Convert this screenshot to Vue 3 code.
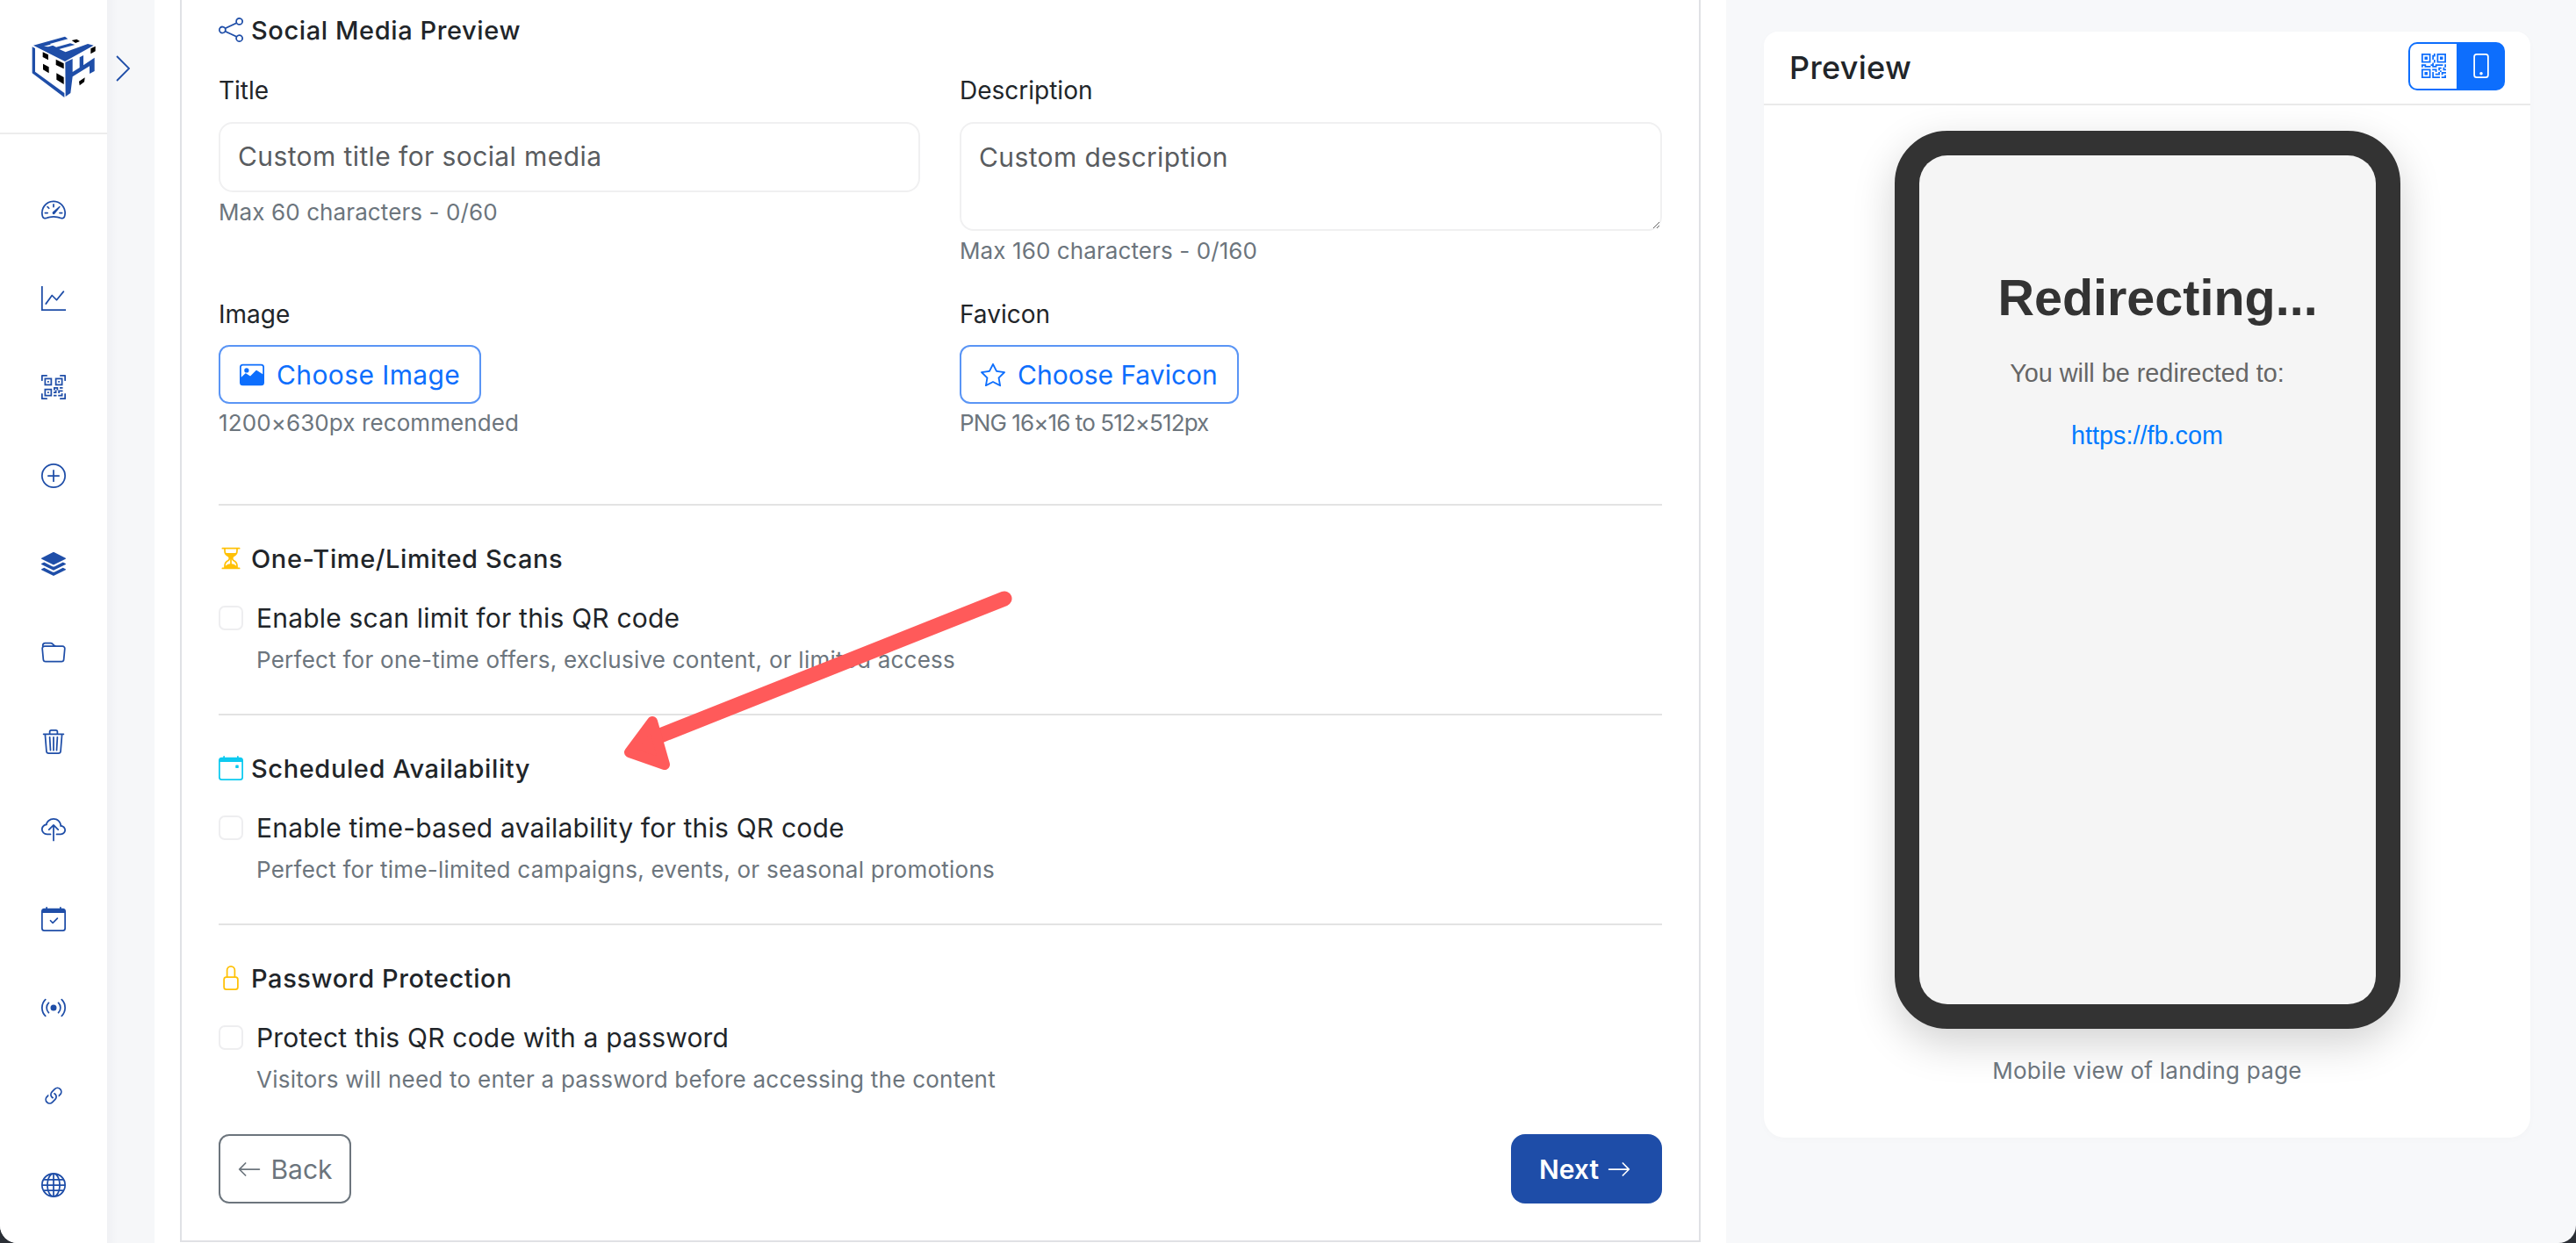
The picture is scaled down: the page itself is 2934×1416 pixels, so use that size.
<template>
  <div class="shell">
    <div class="app">
      <aside class="sidebar">
        <div class="logo-wrap">
          <svg class="logo" viewBox="105 120 225 216">
            <polygon fill="#1f4ea8" points="110,160 120,165 120,245 220,318 220,333 110,250" />
            <polygon fill="#1f4ea8" points="223,213 248,201 248,246 272,231 272,196 285,189 285,223 323,197 323,243 306,252 306,226 248,262 241,318 224,330" />
            <polygon fill="#1f4ea8" points="114,155 222,125 232,133 170,150 192,161 240,148 256,153 202,168 224,178 300,150 320,155 222,210" />
            <polygon fill="#fff" points="150,158 205,143 212,146 165,160" />
            <polygon fill="#000" points="146,178 165,187 165,205 146,195" />
            <polygon fill="#000" points="147,218 167,229 167,250 147,238" />
            <polygon fill="#000" points="191,203 218,217 218,235 191,222" />
            <polygon fill="#000" points="193,250 218,264 218,288 193,272" />
            <polygon fill="#000" points="270,278 290,265 288,280 272,292" />
            <polygon fill="#000" points="310,166 326,158 326,175 310,184" />
            <polygon fill="#000" points="245,138 262,134 273,141 258,147" />
          </svg>
        </div>
        <nav class="nav">
          <svg v-for="(icon, i) in navIcons" :key="i" class="nav-icon" viewBox="0 0 16 16" fill="currentColor">
            <path v-for="d in icon" :key="d" :d="d" />
          </svg>
        </nav>
      </aside>

      <div class="gutter">
        <svg class="toggle" viewBox="0 0 16 30" fill="none" stroke="#1f4ea8" stroke-width="1.8">
          <path d="M1 1l14 14L1 29" />
        </svg>
      </div>

      <main class="form-col">
        <div class="card">
          <h3 class="section-title">
            <svg class="title-icon share" viewBox="0 0 16 16" fill="currentColor"><path :d="shareIcon" /></svg>
            Social Media Preview
          </h3>

          <div class="grid">
            <div class="field">
              <label class="label">Title</label>
              <input class="input" placeholder="Custom title for social media" />
              <div class="hint">Max 60 characters - 0/60</div>
            </div>
            <div class="field">
              <label class="label">Description</label>
              <textarea class="input textarea" placeholder="Custom description"></textarea>
              <div class="hint">Max 160 characters - 0/160</div>
            </div>
            <div class="field">
              <label class="label">Image</label>
              <button class="choose-btn">
                <svg viewBox="0 0 16 16" fill="currentColor">
                  <path d="M2 1h12a2 2 0 0 1 2 2v10a2 2 0 0 1-2 2H2a2 2 0 0 1-2-2V3a2 2 0 0 1 2-2m0 1a1 1 0 0 0-1 1v6.5l2.6-2.3a.5.5 0 0 1 .63-.06l2.66 1.77 3.71-3.71a.5.5 0 0 1 .58-.09L15 7.5V3a1 1 0 0 0-1-1z" />
                  <path d="M4.5 3.6a1.5 1.5 0 1 1 0 3 1.5 1.5 0 0 1 0-3" />
                </svg>
                Choose Image
              </button>
              <div class="hint hint-tight">1200×630px recommended</div>
            </div>
            <div class="field">
              <label class="label">Favicon</label>
              <button class="choose-btn choose-btn--fav">
                <svg viewBox="0 0 16 16" fill="currentColor"><path :d="starIcon" /></svg>
                Choose Favicon
              </button>
              <div class="hint hint-tight hint-narrow">PNG 16×16 to 512×512px</div>
            </div>
          </div>

          <section v-for="s in sections" :key="s.title" class="option">
            <h3 class="section-title">
              <svg class="title-icon" :class="s.tone" viewBox="0 0 16 16" fill="currentColor">
                <path v-for="d in s.icon" :key="d" :d="d" />
              </svg>
              {{ s.title }}
            </h3>
            <label class="check-row">
              <input type="checkbox" class="check" />
              <span>{{ s.label }}</span>
            </label>
            <div class="check-desc">{{ s.desc }}</div>
          </section>

          <div class="actions">
            <button class="btn-back">
              <svg viewBox="0 0 16 16" fill="currentColor"><path :d="arrowLeft" /></svg>
              Back
            </button>
            <button class="btn-next">
              Next
              <svg viewBox="0 0 16 16" fill="currentColor"><path :d="arrowRight" /></svg>
            </button>
          </div>
        </div>
      </main>

      <aside class="preview-col">
        <div class="preview-card">
          <header class="preview-head">
            <h2>Preview</h2>
            <div class="switch">
              <button class="switch-btn">
                <svg viewBox="0 0 16 16" fill="currentColor">
                  <path v-for="d in qrIcon" :key="d" :d="d" />
                </svg>
              </button>
              <button class="switch-btn switch-btn--active">
                <svg viewBox="0 0 16 16" fill="currentColor">
                  <path d="M11 1a1 1 0 0 1 1 1v12a1 1 0 0 1-1 1H5a1 1 0 0 1-1-1V2a1 1 0 0 1 1-1zM5 0a2 2 0 0 0-2 2v12a2 2 0 0 0 2 2h6a2 2 0 0 0 2-2V2a2 2 0 0 0-2-2z" />
                  <path d="M8 14a1 1 0 1 0 0-2 1 1 0 0 0 0 2" />
                </svg>
              </button>
            </div>
          </header>
          <div class="preview-body">
            <div class="phone">
              <div class="screen">
                <h1>Redirecting...</h1>
                <p>You will be redirected to:</p>
                <a>https://fb.com</a>
              </div>
            </div>
            <div class="caption">Mobile view of landing page</div>
          </div>
        </div>
      </aside>

      <svg class="annotation" viewBox="0 0 2934 1416">
        <line x1="1144" y1="682" x2="752" y2="838" stroke="#ff5a5a" stroke-width="17" stroke-linecap="round" />
        <polygon points="743,822 717,857 757,871" fill="#ff5a5a" stroke="#ff5a5a" stroke-width="12" stroke-linejoin="round" />
      </svg>
    </div>
  </div>
</template>

<script setup>
const navIcons = [
  ['M8 4a.5.5 0 0 1 .5.5V6a.5.5 0 0 1-1 0V4.5A.5.5 0 0 1 8 4M3.732 5.732a.5.5 0 0 1 .707 0l.915.914a.5.5 0 1 1-.708.708l-.914-.915a.5.5 0 0 1 0-.707M2 10a.5.5 0 0 1 .5-.5h1.586a.5.5 0 0 1 0 1H2.5A.5.5 0 0 1 2 10m9.5 0a.5.5 0 0 1 .5-.5h1.5a.5.5 0 0 1 0 1H12a.5.5 0 0 1-.5-.5m.754-4.246a.39.39 0 0 0-.527-.02L7.547 9.31a.91.91 0 1 0 1.302 1.258l3.434-4.297a.39.39 0 0 0-.029-.518z', 'M0 10a8 8 0 1 1 15.547 2.661c-.442 1.253-1.845 1.602-2.932 1.25C11.309 13.488 9.475 13 8 13c-1.474 0-3.31.488-4.615.911-1.087.352-2.49.003-2.932-1.25A8 8 0 0 1 0 10m8-7a7 7 0 0 0-6.603 9.329c.203.575.923.876 1.68.63C4.397 12.533 6.358 12 8 12s3.604.532 4.923.96c.757.245 1.477-.056 1.68-.631A7 7 0 0 0 8 3'],
  ['M0 0h1v15h15v1H0zm14.817 3.113a.5.5 0 0 1 .07.704l-4.5 5.5a.5.5 0 0 1-.74.037L7.06 6.767l-3.656 5.027a.5.5 0 0 1-.808-.588l4-5.5a.5.5 0 0 1 .758-.06l2.609 2.61 4.15-5.073a.5.5 0 0 1 .704-.07'],
  ['M0 .5A.5.5 0 0 1 .5 0h3a.5.5 0 0 1 0 1H1v2.5a.5.5 0 0 1-1 0zm12 0a.5.5 0 0 1 .5-.5h3a.5.5 0 0 1 .5.5v3a.5.5 0 0 1-1 0V1h-2.5a.5.5 0 0 1-.5-.5M.5 12a.5.5 0 0 1 .5.5V15h2.5a.5.5 0 0 1 0 1h-3a.5.5 0 0 1-.5-.5v-3a.5.5 0 0 1 .5-.5m15 0a.5.5 0 0 1 .5.5v3a.5.5 0 0 1-.5.5h-3a.5.5 0 0 1 0-1H15v-2.5a.5.5 0 0 1 .5-.5M4 4h1v1H4z', 'M7 2H2v5h5zM3 3h3v3H3zm2 8H4v1h1z', 'M7 9H2v5h5zm-4 1h3v3H3zm8-6h1v1h-1z', 'M9 2h5v5H9zm1 1v3h3V3zM8 8v2h1v1H8v1h2v-2h1v2h1v-1h2v-1h-3V8zm2 2H9V9h1zm4 2h-1v1h-2v1h3zm-4 2v-1H8v1z', 'M12 9h2V8h-2z'],
  ['M8 15A7 7 0 1 1 8 1a7 7 0 0 1 0 14m0 1A8 8 0 1 0 8 0a8 8 0 0 0 0 16', 'M8 4a.5.5 0 0 1 .5.5v3h3a.5.5 0 0 1 0 1h-3v3a.5.5 0 0 1-1 0v-3h-3a.5.5 0 0 1 0-1h3v-3A.5.5 0 0 1 8 4'],
  ['m14.12 10.163 1.715.858c.22.11.22.424 0 .534L8.267 15.34a.6.6 0 0 1-.534 0L.165 11.555a.299.299 0 0 1 0-.534l1.716-.858 5.317 2.659c.505.252 1.1.252 1.604 0l5.317-2.66zM7.733.063a.6.6 0 0 1 .534 0l7.568 3.784a.3.3 0 0 1 0 .535L8.267 8.165a.6.6 0 0 1-.534 0L.165 4.382a.299.299 0 0 1 0-.535z', 'm14.12 6.576 1.715.858c.22.11.22.424 0 .534l-7.568 3.784a.6.6 0 0 1-.534 0L.165 7.968a.299.299 0 0 1 0-.534l1.716-.858 5.317 2.659c.505.252 1.1.252 1.604 0z'],
  ['M.54 3.87.5 3a2 2 0 0 1 2-2h3.672a2 2 0 0 1 1.414.586l.828.828A2 2 0 0 0 9.828 3h3.982a2 2 0 0 1 1.992 2.181l-.637 7A2 2 0 0 1 13.174 14H2.826a2 2 0 0 1-1.991-1.819l-.637-7a2 2 0 0 1 .342-1.31zM2.19 4a1 1 0 0 0-.996 1.09l.637 7a1 1 0 0 0 .995.91h10.348a1 1 0 0 0 .995-.91l.637-7A1 1 0 0 0 13.81 4zm4.69-1.707A1 1 0 0 0 6.172 2H2.5a1 1 0 0 0-1 .981l.006.139q.323-.119.684-.12h5.396z'],
  ['M6.5 1h3a.5.5 0 0 1 .5.5v1H6v-1a.5.5 0 0 1 .5-.5M11 2.5v-1A1.5 1.5 0 0 0 9.5 0h-3A1.5 1.5 0 0 0 5 1.5v1H1.5a.5.5 0 0 0 0 1h.538l.853 10.66A2 2 0 0 0 4.885 16h6.23a2 2 0 0 0 1.994-1.84l.853-10.66h.538a.5.5 0 0 0 0-1zm1.958 1-.846 10.58a1 1 0 0 1-.997.92h-6.23a1 1 0 0 1-.997-.92L3.042 3.5zm-7.487 1a.5.5 0 0 1 .528.47l.5 8.5a.5.5 0 0 1-.998.06L5 5.03a.5.5 0 0 1 .47-.53Zm5.058 0a.5.5 0 0 1 .47.53l-.5 8.5a.5.5 0 1 1-.998-.06l.5-8.5a.5.5 0 0 1 .528-.47M8 4.5a.5.5 0 0 1 .5.5v8.5a.5.5 0 0 1-1 0V5a.5.5 0 0 1 .5-.5'],
  ['M4.406 1.342A5.53 5.53 0 0 1 8 0c2.69 0 4.923 2 5.166 4.579C14.758 4.804 16 6.137 16 7.773 16 9.569 14.502 11 12.687 11H10a.5.5 0 0 1 0-1h2.688C13.979 10 15 8.988 15 7.773c0-1.216-1.02-2.228-2.313-2.228h-.5v-.5C12.188 2.825 10.328 1 8 1a4.53 4.53 0 0 0-2.941 1.1c-.757.652-1.153 1.438-1.153 2.055v.448l-.445.049C2.064 4.805 1 5.952 1 7.318 1 8.785 2.23 10 3.781 10H6a.5.5 0 0 1 0 1H3.781C1.708 11 0 9.366 0 7.318c0-1.763 1.266-3.223 2.942-3.593.143-.863.698-1.723 1.464-2.383', 'M7.646 4.146a.5.5 0 0 1 .708 0l3 3a.5.5 0 0 1-.708.708L8.5 5.707V14.5a.5.5 0 0 1-1 0V5.707L5.354 7.854a.5.5 0 1 1-.708-.708z'],
  ['M10.854 7.146a.5.5 0 0 1 0 .708l-3 3a.5.5 0 0 1-.708 0l-1.5-1.5a.5.5 0 1 1 .708-.708L7.5 9.793l2.646-2.647a.5.5 0 0 1 .708 0', 'M3.5 0a.5.5 0 0 1 .5.5V1h8V.5a.5.5 0 0 1 1 0V1h1a2 2 0 0 1 2 2v11a2 2 0 0 1-2 2H2a2 2 0 0 1-2-2V3a2 2 0 0 1 2-2h1V.5a.5.5 0 0 1 .5-.5M1 4v10a1 1 0 0 0 1 1h12a1 1 0 0 0 1-1V4z'],
  ['M3.05 3.05a7 7 0 0 0 0 9.9.5.5 0 0 1-.707.707 8 8 0 0 1 0-11.314.5.5 0 0 1 .707.707m2.122 2.122a4 4 0 0 0 0 5.656.5.5 0 1 1-.708.708 5 5 0 0 1 0-7.072.5.5 0 0 1 .708.708m5.656-.708a.5.5 0 0 1 .708 0 5 5 0 0 1 0 7.072.5.5 0 1 1-.708-.708 4 4 0 0 0 0-5.656.5.5 0 0 1 0-.708m2.122-2.12a.5.5 0 0 1 .707 0 8 8 0 0 1 0 11.313.5.5 0 0 1-.707-.707 7 7 0 0 0 0-9.9.5.5 0 0 1 0-.707zM10 8a2 2 0 1 1-4 0 2 2 0 0 1 4 0'],
  ['M4.715 6.542 3.343 7.914a3 3 0 1 0 4.243 4.243l1.828-1.829A3 3 0 0 0 8.586 5.5L8 6.086a1 1 0 0 0-.154.199 2 2 0 0 1 .861 3.337L6.88 11.45a2 2 0 1 1-2.83-2.83l.793-.792a4 4 0 0 1-.128-1.287z', 'M6.586 4.672A3 3 0 0 0 7.414 9.5l.775-.776a2 2 0 0 1-.896-3.346L9.12 3.55a2 2 0 1 1 2.83 2.83l-.793.792c.112.42.155.855.128 1.287l1.372-1.372a3 3 0 1 0-4.243-4.243z'],
  ['M0 8a8 8 0 1 1 16 0A8 8 0 0 1 0 8m7.5-6.923c-.67.204-1.335.82-1.887 1.855A8 8 0 0 0 5.145 4H7.5zM4.09 4a9.3 9.3 0 0 1 .64-1.539 7 7 0 0 1 .597-.933A7.03 7.03 0 0 0 2.255 4zm-.582 3.5c.03-.877.138-1.718.312-2.5H1.674a7 7 0 0 0-.656 2.5zM4.847 5a12.5 12.5 0 0 0-.338 2.5H7.5V5zM8.5 5v2.5h2.99a12.5 12.5 0 0 0-.337-2.5zM4.51 8.5a12.5 12.5 0 0 0 .337 2.5H7.5V8.5zm3.99 0V11h2.653c.187-.765.306-1.608.338-2.5zM5.145 12q.208.58.468 1.068c.552 1.035 1.218 1.65 1.887 1.855V12zm.182 2.472a7 7 0 0 1-.597-.933A9.3 9.3 0 0 1 4.09 12H2.255a7 7 0 0 0 3.072 2.472M3.82 11a13.7 13.7 0 0 1-.312-2.5h-2.49c.062.89.291 1.733.656 2.5zm6.853 3.472A7 7 0 0 0 13.745 12H11.91a9.3 9.3 0 0 1-.64 1.539 7 7 0 0 1-.597.933M8.5 12v2.923c.67-.204 1.335-.82 1.887-1.855q.26-.487.468-1.068zm3.68-1h2.146c.365-.767.594-1.61.656-2.5h-2.49a13.7 13.7 0 0 1-.312 2.5m2.802-3.5a7 7 0 0 0-.656-2.5H12.18c.174.782.282 1.623.312 2.5zM11.27 2.461c.247.464.462.98.64 1.539h1.835a7 7 0 0 0-3.072-2.472c.218.284.418.598.597.933M10.855 4a8 8 0 0 0-.468-1.068C9.835 1.897 9.17 1.282 8.5 1.077V4z'],
]

const shareIcon = 'M13.5 1a1.5 1.5 0 1 0 0 3 1.5 1.5 0 0 0 0-3M11 2.5a2.5 2.5 0 1 1 .603 1.628l-6.718 3.12a2.5 2.5 0 0 1 0 1.504l6.718 3.12a2.5 2.5 0 1 1-.488.876l-6.718-3.12a2.5 2.5 0 1 1 0-3.256l6.718-3.12A2.5 2.5 0 0 1 11 2.5m-8.5 4a1.5 1.5 0 1 0 0 3 1.5 1.5 0 0 0 0-3m11 5.5a1.5 1.5 0 1 0 0 3 1.5 1.5 0 0 0 0-3'
const starIcon = 'M2.866 14.85c-.078.444.36.791.746.593l4.39-2.256 4.389 2.256c.386.198.824-.149.746-.592l-.83-4.73 3.522-3.356c.33-.314.16-.888-.282-.95l-4.898-.696L8.465.792a.513.513 0 0 0-.927 0L5.354 5.12l-4.898.696c-.441.062-.612.636-.283.95l3.523 3.356-.83 4.73zm4.905-2.767-3.686 1.894.694-3.957a.56.56 0 0 0-.163-.505L1.71 6.745l4.052-.576a.53.53 0 0 0 .393-.288L8 2.223l1.847 3.658a.53.53 0 0 0 .393.288l4.052.575-2.906 2.77a.56.56 0 0 0-.163.506l.694 3.957-3.686-1.894a.5.5 0 0 0-.461 0z'
const arrowLeft = 'M15 8a.5.5 0 0 0-.5-.5H2.707l3.147-3.146a.5.5 0 1 0-.708-.708l-4 4a.5.5 0 0 0 0 .708l4 4a.5.5 0 0 0 .708-.708L2.707 8.5H14.5A.5.5 0 0 0 15 8'
const arrowRight = 'M1 8a.5.5 0 0 1 .5-.5h11.793l-3.147-3.146a.5.5 0 0 1 .708-.708l4 4a.5.5 0 0 1 0 .708l-4 4a.5.5 0 0 1-.708-.708L13.293 8.5H1.5A.5.5 0 0 1 1 8'
const qrIcon = [
  'M2 2h2v2H2z',
  'M6 0v6H0V0zM5 1H1v4h4zM4 12H2v2h2z',
  'M6 10v6H0v-6zm-5 1v4h4v-4zm11-9h2v2h-2z',
  'M10 0v6h6V0zm5 1v4h-4V1zM8 1V0h1v2H8v2H7V1zm0 5V4h1v2zM6 8V7h1V6h1v2h1V7h5v1h-4v1H7V8zm0 0v1H2V8H1v1H0V7h3v1zm10 1h-1V7h1zm-1 0h-1v2h2v-1h-1zm-4 0h2v1h-1v1h-1zm2 3v-1h-1v1h-1v1H9v1h3v-2zm0 0h3v1h-2v1h-1zm-4-1v1h1v-2H7v1z',
  'M7 12h1v3h4v1H7zm9 2v2h-3v-1h2v-1z',
]

const sections = [
  {
    title: 'One-Time/Limited Scans',
    label: 'Enable scan limit for this QR code',
    desc: 'Perfect for one-time offers, exclusive content, or limited access',
    tone: 'amber',
    icon: ['M2.5 15a.5.5 0 1 1 0-1h1v-1a4.5 4.5 0 0 1 2.557-4.06c.29-.139.443-.377.443-.59v-.7c0-.213-.154-.451-.443-.59A4.5 4.5 0 0 1 3.5 3V2h-1a.5.5 0 0 1 0-1h11a.5.5 0 0 1 0 1h-1v1a4.5 4.5 0 0 1-2.557 4.06c-.29.139-.443.377-.443.59v.7c0 .213.154.451.443.59A4.5 4.5 0 0 1 12.5 13v1h1a.5.5 0 0 1 0 1zm2-13v1c0 .537.12 1.045.337 1.5h6.326c.216-.455.337-.963.337-1.5V2zm3 6.35c0 .701-.478 1.236-1.011 1.492A3.5 3.5 0 0 0 4.5 13s.866-1.299 3-1.48zm1 0v3.17c2.134.181 3 1.48 3 1.48a3.5 3.5 0 0 0-1.989-3.158C8.978 9.586 8.5 9.052 8.5 8.351z'],
  },
  {
    title: 'Scheduled Availability',
    label: 'Enable time-based availability for this QR code',
    desc: 'Perfect for time-limited campaigns, events, or seasonal promotions',
    tone: 'cyan',
    icon: ['M11 6.5a.5.5 0 0 1 .5-.5h1a.5.5 0 0 1 .5.5v1a.5.5 0 0 1-.5.5h-1a.5.5 0 0 1-.5-.5z', 'M3.5 0a.5.5 0 0 1 .5.5V1h8V.5a.5.5 0 0 1 1 0V1h1a2 2 0 0 1 2 2v11a2 2 0 0 1-2 2H2a2 2 0 0 1-2-2V3a2 2 0 0 1 2-2h1V.5a.5.5 0 0 1 .5-.5M1 4v10a1 1 0 0 0 1 1h12a1 1 0 0 0 1-1V4z'],
  },
  {
    title: 'Password Protection',
    label: 'Protect this QR code with a password',
    desc: 'Visitors will need to enter a password before accessing the content',
    tone: 'amber',
    icon: ['M8 1a2 2 0 0 1 2 2v4H6V3a2 2 0 0 1 2-2m3 6V3a3 3 0 0 0-6 0v4a2 2 0 0 0-2 2v5a2 2 0 0 0 2 2h6a2 2 0 0 0 2-2V9a2 2 0 0 0-2-2M5 8h6a1 1 0 0 1 1 1v5a1 1 0 0 1-1 1H5a1 1 0 0 1-1-1V9a1 1 0 0 1 1-1'],
  },
]
</script>

<style>
html, body { margin: 0; background: #2b2f36; }
</style>

<style scoped>
.shell {
  width: 2934px;
  height: 1416px;
  background: #2b2f36;
  overflow: hidden;
  font-family: Inter, "Noto Sans", sans-serif;
}

.app {
  position: relative;
  display: flex;
  height: 100%;
  background: #f7f8fa;
  border-radius: 0 0 20px 20px;
  overflow: hidden;
}

/* sidebar */
.sidebar {
  width: 122px;
  flex: none;
  background: #fff;
}
.logo-wrap {
  height: 153px;
  box-sizing: border-box;
  border-bottom: 2px solid #ececec;
  padding: 40px 0 0 35px;
}
.logo {
  display: block;
  width: 75px;
  height: 72px;
}
.nav {
  display: flex;
  flex-direction: column;
  align-items: center;
  gap: 73px;
  padding-top: 72px;
  color: #1f4ea8;
}
.nav-icon {
  width: 28px;
  height: 28px;
  flex: none;
}

.gutter {
  position: relative;
  width: 54px;
  flex: none;
  background: linear-gradient(90deg, #f0f1f4, #f6f7f9 12px);
}
.toggle {
  position: absolute;
  left: 10px;
  top: 63px;
  width: 16px;
  height: 30px;
}

/* form */
.form-col {
  width: 1790px;
  flex: none;
  box-sizing: border-box;
  padding: 0 29px;
  background: #fff;
}
.card {
  box-sizing: border-box;
  width: 1732px;
  padding: 14px 42px 42px 42px;
  background: #fff;
  border: 2px solid #e0e1e5;
  border-top: 0;
}
.section-title {
  display: flex;
  align-items: center;
  gap: 9px;
  box-sizing: border-box;
  margin: 0;
  height: 42px;
  padding-bottom: 2px;
  font-size: 29px;
  font-weight: 500;
  letter-spacing: 0.6px;
  color: #212529;
}
.title-icon {
  width: 28px;
  height: 28px;
  flex: none;
}
.share { color: #1f4ea8; }
.amber { color: #ffc107; }
.cyan { color: #0dcaf0; }

.grid {
  display: grid;
  grid-template-columns: 799px 800px;
  column-gap: 45px;
  row-gap: 36px;
  margin-top: 29px;
}
.label {
  display: block;
  height: 36px;
  line-height: 36px;
  margin-bottom: 18px;
  font-size: 28px;
  color: #212529;
}
.input {
  display: block;
  box-sizing: border-box;
  width: 100%;
  height: 80px;
  padding: 0 20px 2px;
  border: 2px solid #f0f0f1;
  border-radius: 16px;
  background: #fff;
  font: 400 30px Inter, sans-serif;
  letter-spacing: 0.4px;
  color: #595c5f;
  outline: none;
}
.input::placeholder {
  color: #595c5f;
  opacity: 1;
}
.textarea {
  height: 124px;
  padding: 16px 20px;
  line-height: 44px;
}
.hint {
  height: 36px;
  line-height: 36px;
  margin-top: 5px;
  font-size: 26px;
  letter-spacing: 0.1px;
  color: #6c757d;
}
.hint-tight { margin-top: 4px; }
.hint-narrow { letter-spacing: -0.9px; }

.choose-btn {
  display: inline-flex;
  align-items: center;
  gap: 14px;
  height: 67px;
  margin-top: -1px;
  padding: 0 22px;
  border: 2px solid #5a95f5;
  border-radius: 12px;
  background: #fff;
  font: 400 30px Inter, sans-serif;
  letter-spacing: 0.4px;
  color: #0d6efd;
}
.choose-btn--fav { letter-spacing: 0; }
.choose-btn svg {
  width: 28px;
  height: 28px;
}

.option {
  padding: 40px 0 43px;
  border-top: 2px solid #e3e3e3;
}
.grid + .option {
  margin-top: 74px;
}
.option:last-of-type {
  padding-bottom: 0;
}
.check-row {
  display: flex;
  align-items: center;
  gap: 15px;
  height: 40px;
  margin-top: 26px;
  font-size: 30px;
  letter-spacing: 0.2px;
  color: #212529;
}
.check {
  appearance: none;
  width: 28px;
  height: 28px;
  margin: 0;
  flex: none;
  border: 2px solid #eeeef0;
  border-radius: 7px;
  background: #fff;
}
.check-desc {
  height: 36px;
  line-height: 36px;
  margin: 10px 0 0 43px;
  font-size: 26px;
  letter-spacing: 0.25px;
  color: #6c757d;
}

.actions {
  display: flex;
  justify-content: space-between;
  margin-top: 44px;
}
.btn-back,
.btn-next {
  display: inline-flex;
  align-items: center;
  justify-content: center;
  box-sizing: border-box;
  height: 79px;
  font: 400 30px Inter, sans-serif;
}
.btn-back {
  width: 151px;
  gap: 10px;
  border: 2px solid #6c757d;
  border-radius: 12px;
  background: #fff;
  color: #6c757d;
}
.btn-next {
  width: 172px;
  gap: 9px;
  padding-left: 3px;
  border: 0;
  border-radius: 16px;
  background: #1e4da8;
  color: #fff;
  font-weight: 600;
}
.btn-back svg,
.btn-next svg {
  width: 28px;
  height: 28px;
}

/* preview */
.preview-col {
  flex: 1;
  box-sizing: border-box;
  padding: 36px 52px 0 43px;
}
.preview-card {
  background: #fff;
  border-radius: 16px 16px 24px 24px;
  box-shadow: 0 2px 8px rgba(0, 0, 0, 0.02);
}
.preview-head {
  display: flex;
  align-items: center;
  justify-content: space-between;
  box-sizing: border-box;
  height: 84px;
  padding: 0 29px;
  border-bottom: 2px solid #eaeaea;
}
.preview-head h2 {
  margin: 0;
  font-size: 36px;
  font-weight: 500;
  letter-spacing: 0.3px;
  color: #212529;
}
.switch {
  display: flex;
  height: 55px;
  margin-top: -4px;
}
.switch-btn {
  display: flex;
  align-items: center;
  justify-content: center;
  box-sizing: border-box;
  width: 55px;
  padding: 0;
  border: 2px solid #0d6efd;
  border-right: 0;
  border-radius: 10px 0 0 10px;
  background: #fff;
  color: #0d6efd;
}
.switch-btn--active {
  border: 0;
  border-radius: 0 10px 10px 0;
  background: #0d6efd;
  color: #fff;
}
.switch-btn svg {
  width: 28px;
  height: 28px;
}
.preview-body {
  display: flex;
  flex-direction: column;
  align-items: center;
  padding: 29px 0 58px;
}
.phone {
  box-sizing: border-box;
  width: 576px;
  height: 1023px;
  border: 28px solid #333;
  border-radius: 60px;
  background: #333;
  box-shadow: 0 16px 48px rgba(0, 0, 0, 0.18);
}
.screen {
  height: 100%;
  box-sizing: border-box;
  padding-top: 125px;
  border-radius: 32px;
  background: #f5f5f5;
  text-align: center;
  font-family: "Liberation Sans", Arial, sans-serif;
}
.screen h1 {
  margin: 0;
  height: 74px;
  padding-left: 24px;
  line-height: 74px;
  font-size: 57.5px;
  font-weight: 700;
  color: #333;
}
.screen p {
  margin: 31px 0 0;
  line-height: 37px;
  font-size: 28.8px;
  color: #666;
}
.screen a {
  display: block;
  margin-top: 34px;
  line-height: 37px;
  font-size: 28.8px;
  color: #007bff;
}
.caption {
  margin-top: 30px;
  height: 36px;
  line-height: 36px;
  font-size: 26px;
  letter-spacing: 0.25px;
  color: #6c757d;
}

.annotation {
  position: absolute;
  left: 0;
  top: 0;
  width: 2934px;
  height: 1416px;
  pointer-events: none;
}
</style>
